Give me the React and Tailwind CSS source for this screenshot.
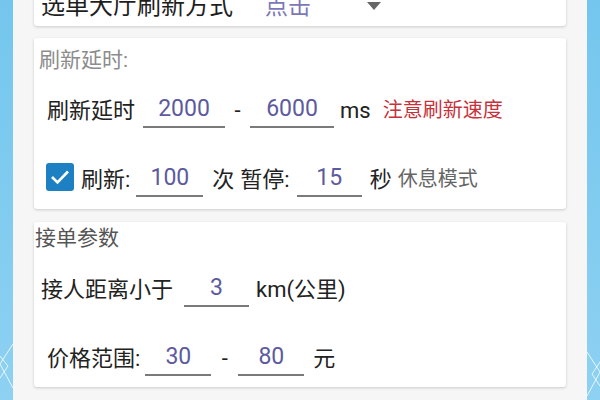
import React from 'react';

const Field = ({ value, w }) => (
  <span
    className={`inline-block ${w} text-center text-[23px] leading-[30px] pb-[2px] text-[#5d5a9f] border-b-2 border-[#7a7a7a]`}
  >
    {value}
  </span>
);

const Strip = ({ side }) => (
  <div className="w-[13px] h-full shrink-0 bg-gradient-to-b from-[#74c6ee] via-[#80cbf0] to-[#8ed1f2] overflow-hidden">
    <svg width="13" height="400" viewBox="0 0 13 400">
      {side === 'left' ? (
        <g stroke="#ffffff" strokeOpacity="0.8" strokeWidth="1" fill="none">
          <path d="M13 344 L0 364 L13 388" />
          <path d="M0 356 L8 366 L0 378" />
        </g>
      ) : (
        <g stroke="#ffffff" strokeOpacity="0.8" strokeWidth="1" fill="none">
          <path d="M0 352 L13 372 L0 396" />
          <path d="M13 362 L5 374 L13 386" />
        </g>
      )}
    </svg>
  </div>
);

const Card = ({ className, children }) => (
  <div className={`bg-white rounded-[3px] shadow-[0_1px_3px_rgba(0,0,0,0.18)] ${className}`}>
    {children}
  </div>
);

export default function App() {
  return (
    <div
      className="w-[600px] h-[400px] flex overflow-hidden bg-[#f6f6f6] text-[#222]"
      style={{ fontFamily: "Roboto, 'Noto Sans CJK SC', sans-serif" }}
    >
      <Strip side="left" />
      <div className="flex-1 flex flex-col px-[21px] bg-[#f6f6f6]">
        <Card className="-mt-[14px] h-[40px] flex items-center pl-[7px] shrink-0">
          <span className="text-[24px] leading-none text-[#1e1e1e]">选单大厅刷新方式</span>
          <span className="ml-[32px] text-[23px] leading-none text-[#7b77b9]">点击</span>
          <svg className="ml-[56px]" width="14" height="8" viewBox="0 0 14 8">
            <path d="M0 0 L14 0 L7 8 Z" fill="#666" />
          </svg>
        </Card>

        <Card className="mt-[12px] h-[171px] shrink-0 flex flex-col">
          <div className="pl-[5px] pt-[9px] text-[21px] leading-[26px] text-[#8c8c8c]">刷新延时:</div>
          <div className="flex items-end pl-[13px] mt-[21px] text-[22px] leading-[30px]">
            <span className="pb-[2px]">刷新延时</span>
            <span className="ml-[8px]"><Field value="2000" w="w-[82px]" /></span>
            <span className="w-[25px] text-center pb-[2px]">-</span>
            <Field value="6000" w="w-[84px]" />
            <span className="ml-[6px] pb-[2px]">ms</span>
            <span className="ml-[12px] pb-[3px] text-[20px] text-[#c6323c]">注意刷新速度</span>
          </div>
          <div className="flex items-end pl-[12px] mt-[35px] text-[22px] leading-[30px]">
            <span className="w-[28px] h-[28px] mb-[6px] rounded-[3px] bg-[#1c80c2] flex items-center justify-center">
              <svg width="20" height="16" viewBox="0 0 20 16">
                <path d="M2 8 L7.5 13.5 L18 2.5" stroke="#fff" strokeWidth="2.6" fill="none" />
              </svg>
            </span>
            <span className="ml-[7px] pb-[2px]">刷新:</span>
            <span className="ml-[6px]"><Field value="100" w="w-[67px]" /></span>
            <span className="ml-[9px] pb-[2px]">次</span>
            <span className="ml-[6px] pb-[2px]">暂停:</span>
            <span className="ml-[7px]"><Field value="15" w="w-[65px]" /></span>
            <span className="ml-[8px] pb-[2px]">秒</span>
            <span className="ml-[6px] pb-[3px] text-[20px] text-[#666]">休息模式</span>
          </div>
        </Card>

        <Card className="mt-[13px] h-[165px] shrink-0 flex flex-col">
          <div className="pl-[1px] pt-[3px] text-[21px] leading-[26px] text-[#555]">接单参数</div>
          <div className="flex items-end pl-[7px] mt-[22px] text-[22px] leading-[30px]">
            <span className="pb-[2px]">接人距离小于</span>
            <span className="ml-[11px]"><Field value="3" w="w-[65px]" /></span>
            <span className="ml-[7px] pb-[2px]">km(公里)</span>
          </div>
          <div className="flex items-end pl-[13px] mt-[35px] text-[22px] leading-[30px]">
            <span className="pb-[2px]">价格范围:</span>
            <span className="ml-[5px]"><Field value="30" w="w-[66px]" /></span>
            <span className="w-[27px] text-center pb-[2px]">-</span>
            <Field value="80" w="w-[66px]" />
            <span className="ml-[9px] pb-[2px]">元</span>
          </div>
        </Card>
      </div>
      <Strip side="right" />
    </div>
  );
}
